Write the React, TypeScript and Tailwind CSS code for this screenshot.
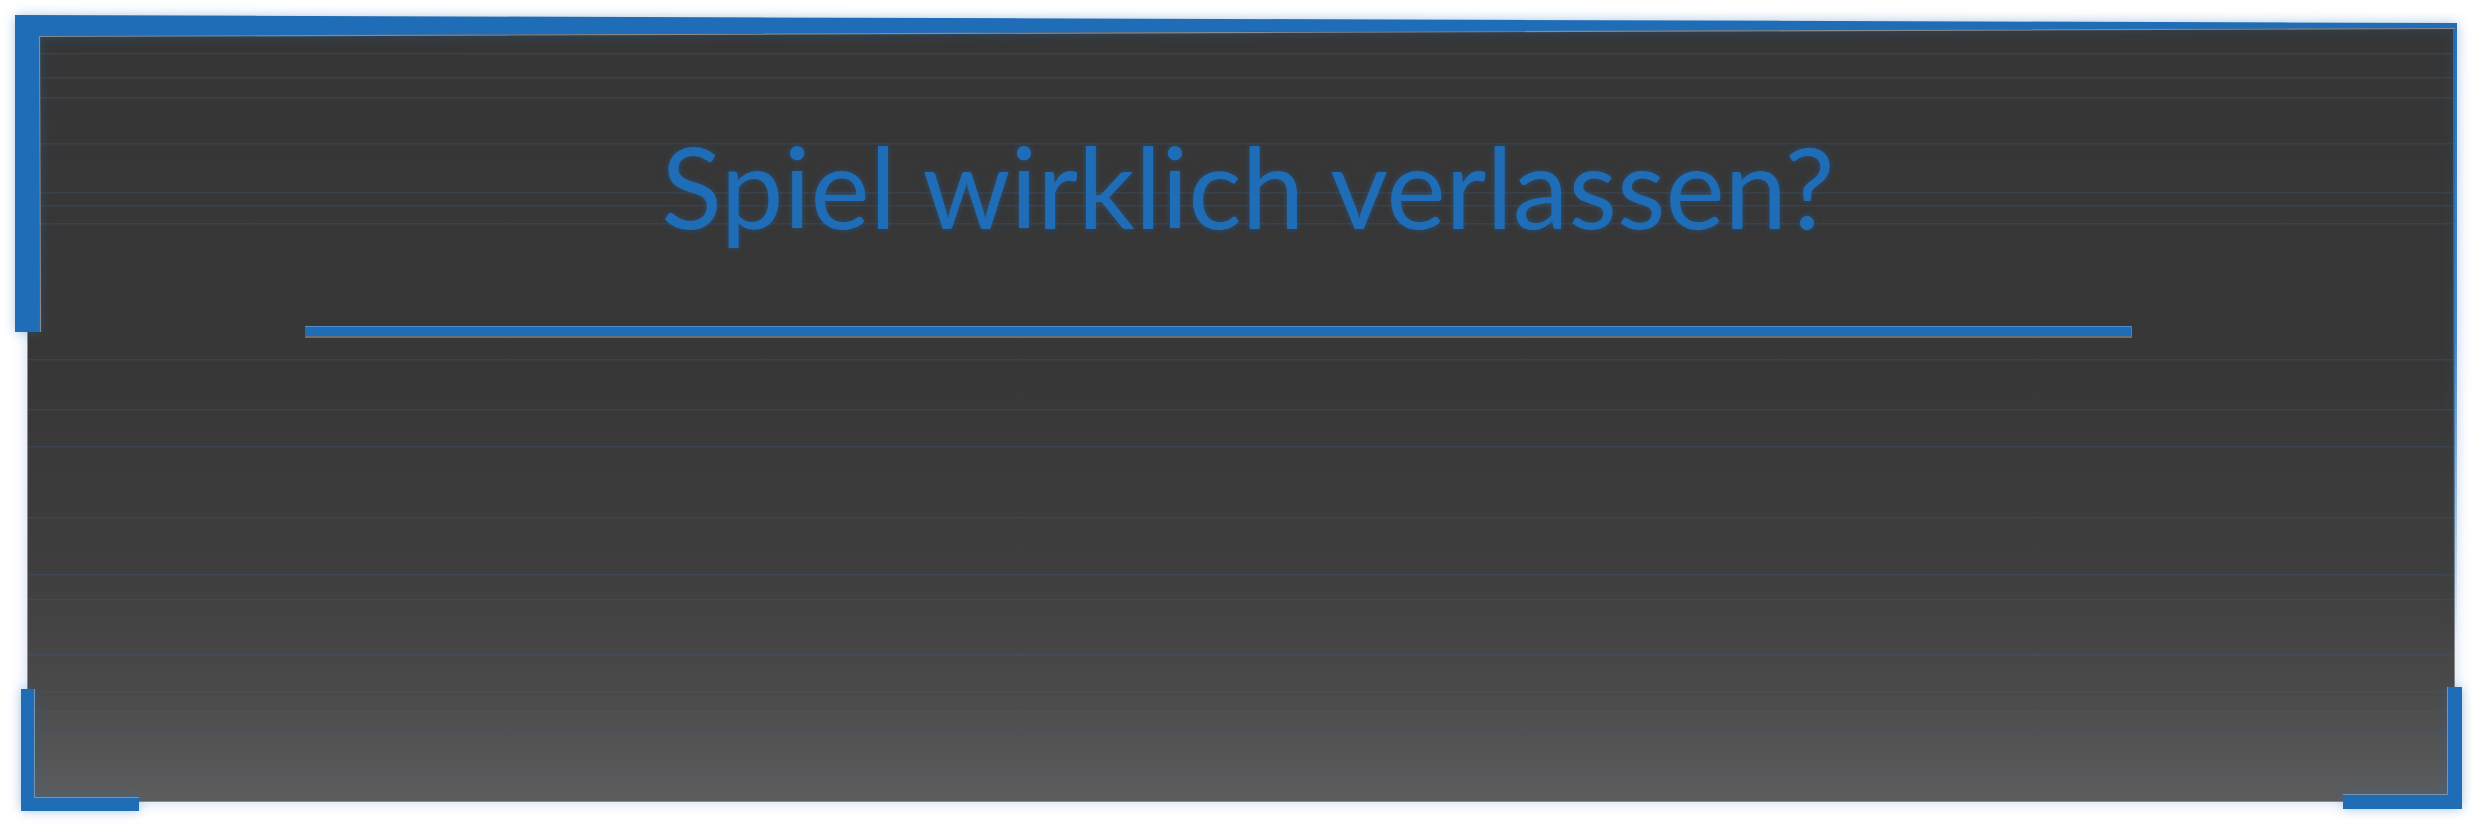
import React from "react";

const LINES = [25, 49, 69, 115, 164, 177, 195, 331, 381, 418, 489, 546, 571, 626, 663, 683, 704, 750, 767];

export default function App() {
  return (
    <div className="relative w-[2477px] h-[826px] bg-white overflow-hidden pt-[28px] pl-[27px]">
      <div className="relative w-[2428px] h-[774px] border-l border-r border-b border-[#8a8a8a] bg-[linear-gradient(to_bottom,#363636_0%,#373737_45%,#3e3e3e_70%,#4a4a4a_86%,#5d5d5d_100%)] shadow-[0_0_14px_rgba(90,140,210,0.3)]">
        <svg className="absolute inset-0 pointer-events-none" width="2426" height="773">
          {LINES.map((y) => (
            <rect key={y} x="0" y={y} width="2426" height="1.5" fill="#3e6590" opacity="0.25" />
          ))}
        </svg>
        <div className="relative flex flex-col">
          <div className="flex justify-center pt-[102px] pl-[14px]">
            <h1 className="text-[112px] leading-[112px] font-normal text-[#1f6db7] [font-family:Lato,'Open_Sans',sans-serif] [text-shadow:0_0_6px_rgba(31,109,183,0.45)]">
              Spiel wirklich verlassen?
            </h1>
          </div>
          <div className="ml-[277px] mt-[84px] w-[1827px] h-[12px] bg-[#1f6db7] border-t border-t-[#4f8ed0] border-b-2 border-b-[#6e6e6e] border-r border-r-[#777]" />
        </div>
      </div>

      <svg
        className="absolute inset-0 pointer-events-none [filter:drop-shadow(0_0_6px_rgba(31,109,183,0.35))]"
        width="2477"
        height="826"
      >
        <defs>
          <linearGradient id="rightEdge" x1="0" y1="0" x2="0" y2="1">
            <stop offset="0" stopColor="#1f6db7" stopOpacity="1" />
            <stop offset="0.5" stopColor="#1f6db7" stopOpacity="0.8" />
            <stop offset="1" stopColor="#1f6db7" stopOpacity="0" />
          </linearGradient>
        </defs>
        <rect x="2453" y="24" width="4" height="620" fill="url(#rightEdge)" />
        <polygon points="15,15 2457,23 2457,28 39,36 40,332 15,332" fill="#1f6db7" />
        <polyline points="2455,28.5 39.5,36.5 40.5,332" fill="none" stroke="#8a8a8a" strokeWidth="1.2" />
        <polygon points="21,689 34,689 34,798 139,798 139,811 21,811" fill="#1f6db7" />
        <polyline points="34.5,689 34.5,797.5 139,797.5" fill="none" stroke="#7f93a8" strokeWidth="1" />
        <polygon points="2448,687 2462,687 2462,809 2343,809 2343,795 2448,795" fill="#1f6db7" />
        <polyline points="2447.5,687 2447.5,794.5 2343,794.5" fill="none" stroke="#7f93a8" strokeWidth="1" />
      </svg>
    </div>
  );
}
